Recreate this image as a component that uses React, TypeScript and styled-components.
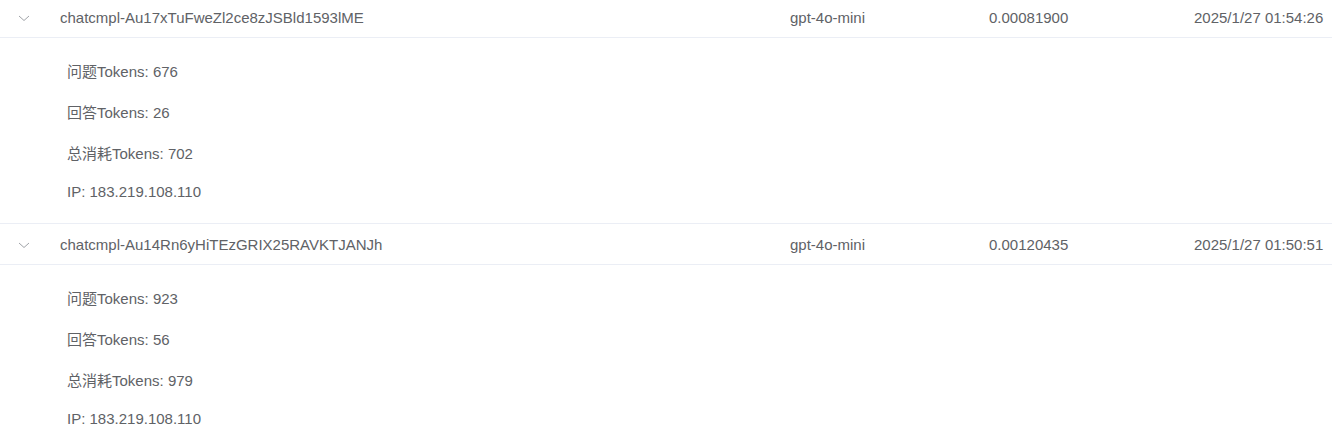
import React from "react";
import styled, { createGlobalStyle } from "styled-components";

const Global = createGlobalStyle`
  html, body { margin: 0; padding: 0; background: #fff; }
  body { font-family: "Liberation Sans", Arial, "Noto Sans CJK SC", sans-serif; color: #606266; }
`;

const Table = styled.div`
  width: 1332px;
  margin-top: -3px;
  font-size: 15px;
`;

const HeaderRow = styled.div`
  display: grid;
  grid-template-columns: 48px 730px 199px 205px 150px;
  align-items: center;
  height: 40px;
  border-bottom: 1px solid #ebeef5;
`;

const Cell = styled.div`
  padding: 0 12px;
  line-height: 23px;
  white-space: nowrap;
  overflow: hidden;
`;

const ChevronCell = styled.div`
  display: flex;
  justify-content: center;
  align-items: center;
  padding-top: 2px;
`;

const Expanded = styled.div`
  padding: 23px 0 20px 67px;
  border-bottom: 1px solid #ebeef5;
  display: flex;
  flex-direction: column;
`;

const Item = styled.div<{ $gap: number }>`
  line-height: 22px;
  margin-bottom: ${(p) => p.$gap}px;
  &:last-child { margin-bottom: 0; }
`;

const Chevron = () => (
  <svg width="12" height="12" viewBox="0 0 12 12" fill="none">
    <path d="M1 4 L6 8.5 L11 4" stroke="#a0a3a8" strokeWidth="1" />
  </svg>
);

const rows = [
  {
    id: "chatcmpl-Au17xTuFweZl2ce8zJSBld1593lME",
    model: "gpt-4o-mini",
    cost: "0.00081900",
    time: "2025/1/27 01:54:26",
    q: 676,
    a: 26,
    t: 702,
    ip: "183.219.108.110",
  },
  {
    id: "chatcmpl-Au14Rn6yHiTEzGRIX25RAVKTJANJh",
    model: "gpt-4o-mini",
    cost: "0.00120435",
    time: "2025/1/27 01:50:51",
    q: 923,
    a: 56,
    t: 979,
    ip: "183.219.108.110",
  },
];

export default function App() {
  return (
    <>
      <Global />
      <Table>
        {rows.map((r) => (
          <React.Fragment key={r.id}>
            <HeaderRow>
              <ChevronCell>
                <Chevron />
              </ChevronCell>
              <Cell>{r.id}</Cell>
              <Cell>{r.model}</Cell>
              <Cell>{r.cost}</Cell>
              <Cell>{r.time}</Cell>
            </HeaderRow>
            <Expanded>
              <Item $gap={19}>问题Tokens: {r.q}</Item>
              <Item $gap={19}>回答Tokens: {r.a}</Item>
              <Item $gap={16}>总消耗Tokens: {r.t}</Item>
              <Item $gap={0}>IP: {r.ip}</Item>
            </Expanded>
          </React.Fragment>
        ))}
      </Table>
    </>
  );
}
